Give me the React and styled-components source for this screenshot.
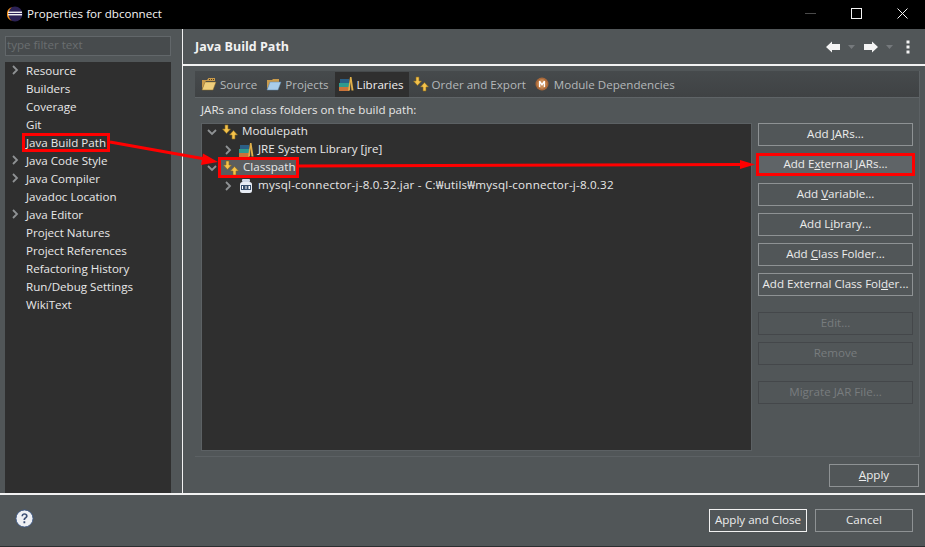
import React from "react";
import styled, { createGlobalStyle } from "styled-components";

const sideItems = [
  { label: "Resource", arrow: true },
  { label: "Builders" },
  { label: "Coverage" },
  { label: "Git" },
  { label: "Java Build Path", marked: true },
  { label: "Java Code Style", arrow: true },
  { label: "Java Compiler", arrow: true },
  { label: "Javadoc Location" },
  { label: "Java Editor", arrow: true },
  { label: "Project Natures" },
  { label: "Project References" },
  { label: "Refactoring History" },
  { label: "Run/Debug Settings" },
  { label: "WikiText" },
];

const buttons = [
  { pre: "Add ", key: "J", post: "ARs...", gap: 0 },
  { pre: "Add E", key: "x", post: "ternal JARs...", gap: 7, marked: true },
  { pre: "Add ", key: "V", post: "ariable...", gap: 7 },
  { pre: "Add L", key: "i", post: "brary...", gap: 7 },
  { pre: "Add ", key: "C", post: "lass Folder...", gap: 7 },
  { pre: "Add External Class Fol", key: "d", post: "er...", gap: 7 },
  { pre: "Edit...", gap: 16, disabled: true },
  { pre: "Remove", gap: 7, disabled: true },
  { pre: "Migrate JAR File...", gap: 16, disabled: true },
];

const GlobalStyle = createGlobalStyle`
  html, body {
    margin: 0;
    padding: 0;
    background: #515658;
  }
  body {
    font-family: "Open Sans", "Noto Sans", sans-serif;
    font-size: 11.6px;
    color: #e6e6e6;
  }
`;

const Page = styled.div`
  position: relative;
  width: 925px;
  height: 547px;
  display: flex;
  flex-direction: column;
  overflow: hidden;
  background: #515658;
  border-bottom: 1px solid #2c2e30;
  box-sizing: border-box;
`;

const TitleBar = styled.div`
  height: 29px;
  flex: none;
  box-sizing: border-box;
  background: #000;
  display: flex;
  align-items: center;
  padding: 0 0 2px 7px;
  gap: 4px;
  color: #f4f4f4;
`;

const TitleText = styled.span`
  flex: 1;
`;

const WindowControls = styled.div`
  display: flex;
`;

const WindowButton = styled.div`
  width: 46px;
  height: 27px;
  display: flex;
  align-items: center;
  justify-content: center;
`;

const Main = styled.div`
  height: 466px;
  flex: none;
  display: flex;
  border-bottom: 2px solid #f2f2f2;
  box-sizing: border-box;
`;

const Sidebar = styled.div`
  width: 182px;
  flex: none;
  box-sizing: border-box;
  padding: 7px 11px 0 5px;
  display: flex;
  flex-direction: column;
  gap: 6px;
`;

const Filter = styled.div`
  height: 20px;
  flex: none;
  box-sizing: border-box;
  background: #474b4d;
  border: 1px solid #62676a;
  color: #6a6e70;
  line-height: 16px;
  padding-left: 1px;
`;

const SideTree = styled.div`
  flex: 1;
  background: #2f2f2f;
`;

const SideRow = styled.div`
  height: 18px;
  box-sizing: border-box;
  display: flex;
  align-items: center;
  padding: 0 0 2px 5px;
  color: #e8e8e8;
`;

const ChevronSlot = styled.span`
  width: 16px;
  flex: none;
  display: flex;
  align-items: center;
`;

const Marked = styled.span`
  padding: 0 ${(p) => (p.$marked ? "1px" : "0")};
  margin-left: ${(p) => (p.$marked ? "-1px" : "0")};
  outline: ${(p) => (p.$marked ? "3px solid #f00" : "none")};
  line-height: 13px;
`;

const Divider = styled.div`
  width: 1px;
  flex: none;
  background: #f2f2f2;
`;

const Content = styled.div`
  flex: 1;
  display: flex;
  flex-direction: column;
  min-width: 0;
`;

const Header = styled.div`
  height: 37px;
  flex: none;
  box-sizing: border-box;
  display: flex;
  align-items: center;
  padding: 0 15px 0 12px;
  border-bottom: 2px solid #f2f2f2;
  font-size: 12.5px;
  font-weight: 700;
  color: #f2f2f2;
`;

const HeaderTitle = styled.span`
  flex: 1;
`;

const HeaderTools = styled.div`
  display: flex;
  align-items: center;
`;

const ToolSlot = styled.span`
  display: flex;
  margin-left: ${(p) => p.$gap}px;
`;

const Folder = styled.div`
  margin: 5px 5px 0 12px;
  height: 386px;
  flex: none;
  box-sizing: border-box;
  border-right: 1px solid #5c6164;
  border-bottom: 1px solid #5c6164;
  display: flex;
  flex-direction: column;
`;

const TabStrip = styled.div`
  height: 26px;
  flex: none;
  display: flex;
  align-items: flex-end;
  gap: 1px;
  padding-left: 3px;
  background: linear-gradient(#464a4c, #3f4244);
`;

const Tab = styled.div`
  height: 25px;
  box-sizing: border-box;
  display: flex;
  align-items: center;
  gap: 3px;
  padding: 0 5px 1px 3px;
  background: ${(p) => (p.$active ? "#2f2f2f" : "transparent")};
  color: ${(p) => (p.$active ? "#f0f0f0" : "#b4b8ba")};
`;

const FolderBody = styled.div`
  flex: 1;
  min-height: 0;
  box-sizing: border-box;
  padding: 4px 5px 5px 6px;
  display: flex;
  flex-direction: column;
  border-top: 1px solid #5f6467;
`;

const PathLabel = styled.div`
  height: 21px;
  flex: none;
  line-height: 15px;
  color: #e6e6e6;
`;

const Columns = styled.div`
  flex: 1;
  min-height: 0;
  display: flex;
  gap: 6px;
`;

const BuildTree = styled.div`
  width: 551px;
  flex: none;
  box-sizing: border-box;
  background: #2f2f2f;
  border: 1px solid #5c6164;
`;

const TreeRow = styled.div`
  height: 18px;
  box-sizing: border-box;
  display: flex;
  align-items: center;
  gap: 5px;
  padding: 0 0 3px ${(p) => p.$indent}px;
`;

const Label = styled.span`
  margin-left: -1px;
  padding-bottom: 2px;
  color: #e8e8e8;
  letter-spacing: ${(p) => (p.$wide ? "0.21px" : "normal")};
`;

const Selected = styled.div`
  height: 15px;
  width: 75px;
  margin-left: -1px;
  padding-left: 2px;
  box-sizing: border-box;
  display: flex;
  align-items: center;
  gap: 5px;
  background: #5a5d5f;
  outline: 3px solid #f00;
`;

const ButtonColumn = styled.div`
  width: 155px;
  flex: none;
  display: flex;
  flex-direction: column;
`;

const Button = styled.div`
  box-sizing: border-box;
  width: ${(p) => (p.$marked ? 159 : p.$w || 155)}px;
  height: 23px;
  flex: none;
  margin-top: ${(p) => p.$gap || 0}px;
  margin-left: ${(p) => (p.$marked ? -2 : 0)}px;
  padding-bottom: 2px;
  display: flex;
  align-items: center;
  justify-content: center;
  white-space: pre;
  border: ${(p) => (p.$marked ? 3 : 1)}px solid
    ${(p) => {
      if (p.$marked) return "#f00";
      if (p.$primary) return "#f2f2f2";
      return p.$disabled ? "#44474a" : "#8e9294";
    }};
  background: ${(p) => (p.$marked ? "#5f6467" : "transparent")};
  color: ${(p) => (p.$disabled ? "#787c7e" : "#ececec")};
`;

const Mnemonic = styled.span`
  text-decoration: underline;
`;

const ApplyRow = styled.div`
  display: flex;
  justify-content: flex-end;
  padding: 7px 6px 0 0;
`;

const Footer = styled.div`
  flex: 1;
  display: flex;
  align-items: flex-start;
  padding: 14px 12px 0 15px;
  gap: 8px;
`;

const Spacer = styled.div`
  flex: 1;
`;

const Overlay = styled.svg`
  position: absolute;
  left: 0;
  top: 0;
  pointer-events: none;
`;

const Chevron = ({ down }) => (
  <svg width="10" height="10" viewBox="0 0 10 10">
    <path
      d={down ? "M1 3l4 4 4-4" : "M3 1l4 4-4 4"}
      fill="none"
      stroke="#8f9294"
      strokeWidth="1.8"
    />
  </svg>
);

const EclipseLogo = () => (
  <svg width="16" height="16" viewBox="0 0 16 16">
    <circle cx="8" cy="8" r="7.5" fill="#2c2255" />
    <path d="M5 .9A7.5 7.5 0 0 0 5 15.1 9 9 0 0 1 5 .9z" fill="#f7941e" />
    <rect x="1" y="5.6" width="14" height="1.4" fill="#f2f2f2" />
    <rect x="1" y="8" width="14" height="1.4" fill="#f2f2f2" />
  </svg>
);

const ContainerIcon = () => (
  <svg width="16" height="16" viewBox="0 0 16 16">
    <path d="M3 1h3v4h2.500L4.500 9.500.5 5H3z" fill="#f4c24b" stroke="#8a6a1c" strokeWidth=".6" />
    <path d="M10 15v-4H7.500L11.500 6.500l4 4.500H13v4z" fill="#f4c24b" stroke="#8a6a1c" strokeWidth=".6" />
  </svg>
);

const BooksIcon = () => (
  <svg width="16" height="16" viewBox="0 0 16 16">
    <rect x="1" y="11" width="10" height="4" fill="#c9733a" />
    <rect x="1" y="7" width="10" height="4" fill="#2f9a8e" />
    <rect x="2" y="3" width="9" height="4" fill="#2b5f86" />
    <path d="M10 14.500L12 1h1.500L15.500 14.500h-2L12.500 6 12 14.500z" fill="#e0b04a" />
  </svg>
);

const JarIcon = () => (
  <svg width="16" height="16" viewBox="-1 0 16 16">
    <rect x="3" y="1" width="8" height="3" rx="1" fill="#cfd8e6" />
    <rect x="1" y="4" width="12" height="11" rx="2.500" fill="#e8edf5" />
    <rect x="2" y="7" width="10" height="5" fill="#39506e" />
    <path d="M3 8h1v3H3zM6.500 8h1v3h-1zM9.500 8h1.500v3H9.500z" fill="#fff" />
  </svg>
);

const SourceIcon = () => (
  <svg width="16" height="16" viewBox="0 0 16 16">
    <path d="M1 4h5l1.500-2H14v3H5L1 13z" fill="#c99b4c" />
    <path d="M1 14l3-8h11l-3 8z" fill="#f0cf7c" stroke="#8f6d2a" strokeWidth=".5" />
    <path d="M8 3h1v1H8zM10 3h1v1h-1zM12 3h1v1h-1z" fill="#5a3d12" />
  </svg>
);

const ProjectsIcon = () => (
  <svg width="16" height="16" viewBox="0 0 16 16">
    <path d="M1 4h5l1-1h6v3H5l-4 7z" fill="#c99b4c" />
    <path d="M1 14l3-8h11l-3 8z" fill="#a9cdea" stroke="#5f87a8" strokeWidth=".5" />
  </svg>
);

const ModuleIcon = () => (
  <svg width="16" height="14" viewBox="0 0 16 14">
    <circle cx="7" cy="7" r="6.500" fill="#a8683a" />
    <circle cx="7" cy="7" r="4.700" fill="#c98b55" />
    <path d="M4 10V4h1.300L7 6.500 8.700 4H10v6H8.700V6.500L7 9 5.300 6.500V10z" fill="#fff" />
  </svg>
);

const HelpIcon = () => (
  <svg width="19" height="19" viewBox="0 0 20 20">
    <circle cx="10" cy="10" r="9" fill="#eef0f4" stroke="#3f5a86" strokeWidth="1" />
    <path
      d="M6.800 7.500C6.800 5.600 8.200 4.500 10 4.500s3.300 1 3.300 2.800c0 2.400-2.600 2.400-2.600 4.400H8.900c0-3 2.600-3 2.600-4.400 0-.8-.6-1.300-1.500-1.300S8.500 6.500 8.500 7.500zM8.900 13h1.900v2H8.900z"
      fill="#3b4e73"
    />
  </svg>
);

const NavArrow = ({ flip }) => (
  <svg width="14" height="12" viewBox="0 0 14 12">
    <path d={flip ? "M14 6L8 .5V3H0v6h8v2.500z" : "M0 6l6-5.500V3h8v6H6v2.500z"} fill="#f4f4f4" />
  </svg>
);

const DropMark = () => (
  <svg width="7" height="4" viewBox="0 0 7 4">
    <path d="M0 0h7L3.500 4z" fill="#75797c" />
  </svg>
);

const MoreDots = () => (
  <svg width="4" height="14" viewBox="0 0 4 14">
    <rect x="0.500" y="0.500" width="3" height="3" fill="#f4f4f4" />
    <rect x="0.500" y="5.500" width="3" height="3" fill="#f4f4f4" />
    <rect x="0.500" y="10.500" width="3" height="3" fill="#f4f4f4" />
  </svg>
);

export default function App() {
  return (
    <Page>
      <GlobalStyle />
      <TitleBar>
        <EclipseLogo />
        <TitleText>Properties for dbconnect</TitleText>
        <WindowControls>
          <WindowButton>
            <svg width="11" height="11" viewBox="0 0 11 11"><path d="M0 5.500h11" stroke="#4a4a4a" /></svg>
          </WindowButton>
          <WindowButton>
            <svg width="11" height="11" viewBox="0 0 11 11"><rect x=".5" y=".5" width="10" height="10" fill="none" stroke="#f4f4f4" /></svg>
          </WindowButton>
          <WindowButton>
            <svg width="11" height="11" viewBox="0 0 11 11"><path d="M.5.500l10 10M10.500.500l-10 10" stroke="#f4f4f4" /></svg>
          </WindowButton>
        </WindowControls>
      </TitleBar>

      <Main>
        <Sidebar>
          <Filter>type filter text</Filter>
          <SideTree>
            {sideItems.map((item) => (
              <SideRow key={item.label}>
                <ChevronSlot>{item.arrow && <Chevron />}</ChevronSlot>
                <Marked $marked={item.marked}>{item.label}</Marked>
              </SideRow>
            ))}
          </SideTree>
        </Sidebar>
        <Divider />
        <Content>
          <Header>
            <HeaderTitle>Java Build Path</HeaderTitle>
            <HeaderTools>
              <NavArrow />
              <ToolSlot $gap={8}><DropMark /></ToolSlot>
              <ToolSlot $gap={9}><NavArrow flip /></ToolSlot>
              <ToolSlot $gap={8}><DropMark /></ToolSlot>
              <ToolSlot $gap={13}><MoreDots /></ToolSlot>
            </HeaderTools>
          </Header>
          <Folder>
            <TabStrip>
              <Tab><SourceIcon /><span>Source</span></Tab>
              <Tab><ProjectsIcon /><span>Projects</span></Tab>
              <Tab $active><BooksIcon /><span>Libraries</span></Tab>
              <Tab><ContainerIcon /><span>Order and Export</span></Tab>
              <Tab><ModuleIcon /><span>Module Dependencies</span></Tab>
            </TabStrip>
            <FolderBody>
              <PathLabel>JARs and class folders on the build path:</PathLabel>
              <Columns>
                <BuildTree>
                  <TreeRow $indent={5}>
                    <Chevron down />
                    <ContainerIcon />
                    <Label>Modulepath</Label>
                  </TreeRow>
                  <TreeRow $indent={21}>
                    <Chevron />
                    <BooksIcon />
                    <Label>JRE System Library [jre]</Label>
                  </TreeRow>
                  <TreeRow $indent={5}>
                    <Chevron down />
                    <Selected>
                      <ContainerIcon />
                      <Label>Classpath</Label>
                    </Selected>
                  </TreeRow>
                  <TreeRow $indent={21}>
                    <Chevron />
                    <JarIcon />
                    <Label $wide>mysql-connector-j-8.0.32.jar - C:₩utils₩mysql-connector-j-8.0.32</Label>
                  </TreeRow>
                </BuildTree>
                <ButtonColumn>
                  {buttons.map((b) => (
                    <Button key={b.pre + (b.key || "")} $gap={b.gap} $disabled={b.disabled} $marked={b.marked}>
                      {b.pre}
                      {b.key && <Mnemonic>{b.key}</Mnemonic>}
                      {b.post}
                    </Button>
                  ))}
                </ButtonColumn>
              </Columns>
            </FolderBody>
          </Folder>
          <ApplyRow>
            <Button $w={90}><Mnemonic>A</Mnemonic>pply</Button>
          </ApplyRow>
        </Content>
      </Main>

      <Footer>
        <HelpIcon />
        <Spacer />
        <Button $w={98} $primary>Apply and Close</Button>
        <Button $w={98}>Cancel</Button>
      </Footer>

      <Overlay width="925" height="547" viewBox="0 0 925 547">
        <path d="M110 142L205 159" stroke="#f00" strokeWidth="3" fill="none" />
        <path d="M218 162L203 153.500 201 165z" fill="#f00" />
        <path d="M298 166L742 164.500" stroke="#f00" strokeWidth="3" fill="none" />
        <path d="M755 164.500L740 160V169z" fill="#f00" />
      </Overlay>
    </Page>
  );
}
